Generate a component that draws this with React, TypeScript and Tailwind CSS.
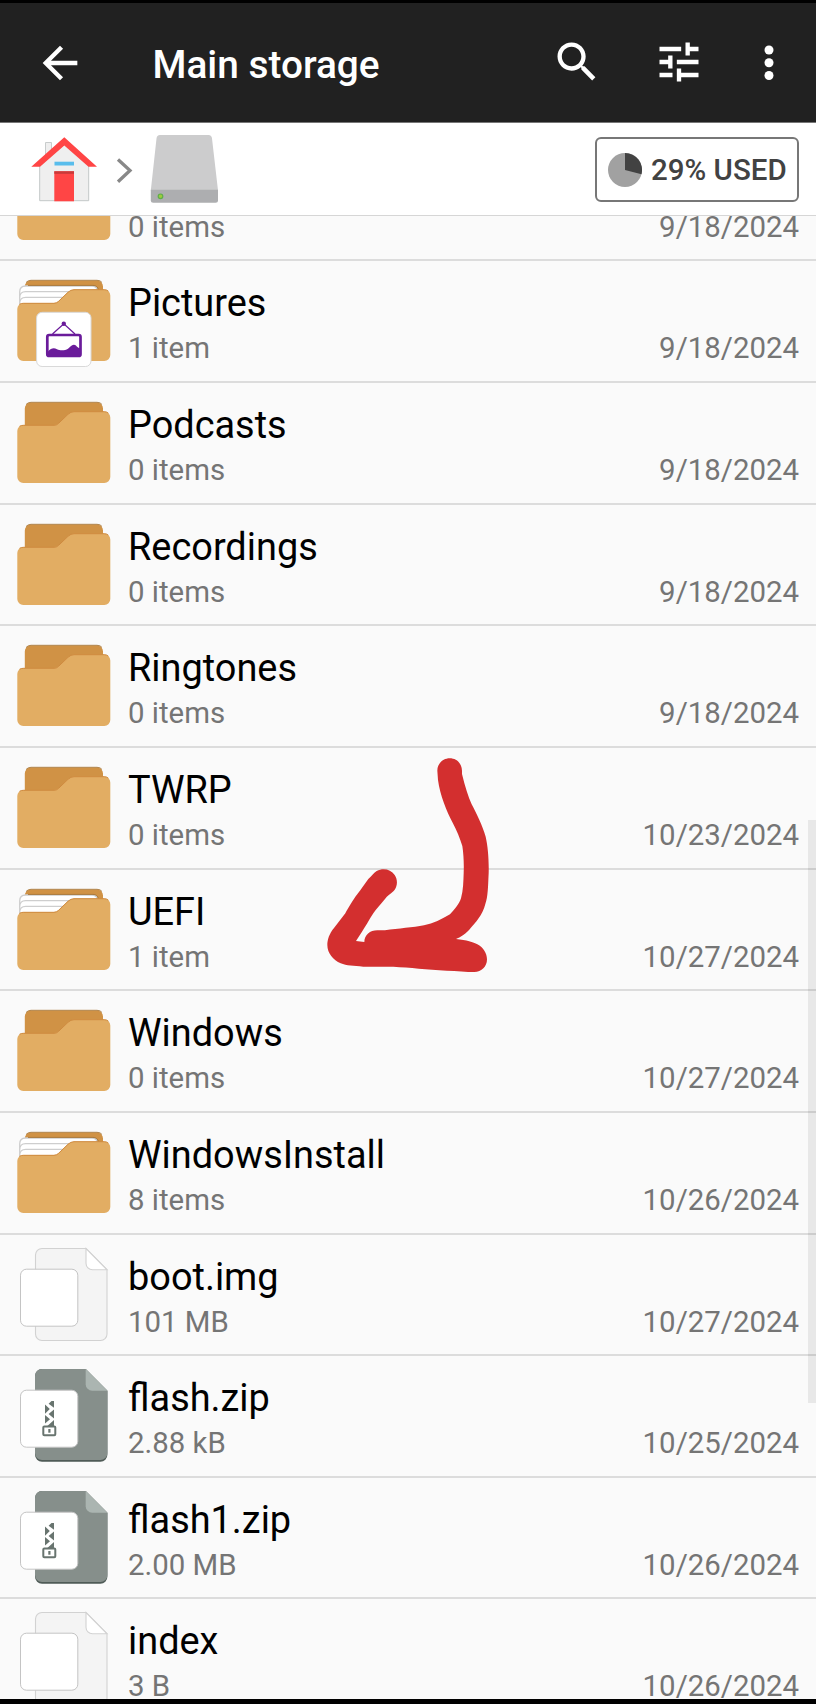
import React from "react";

type Kind = "empty" | "full" | "pictures" | "file" | "zip";

const entries: { name: string; info: string; date: string; kind: Kind }[] = [
  { name: "", info: "0 items", date: "9/18/2024", kind: "empty" },
  { name: "Pictures", info: "1 item", date: "9/18/2024", kind: "pictures" },
  { name: "Podcasts", info: "0 items", date: "9/18/2024", kind: "empty" },
  { name: "Recordings", info: "0 items", date: "9/18/2024", kind: "empty" },
  { name: "Ringtones", info: "0 items", date: "9/18/2024", kind: "empty" },
  { name: "TWRP", info: "0 items", date: "10/23/2024", kind: "empty" },
  { name: "UEFI", info: "1 item", date: "10/27/2024", kind: "full" },
  { name: "Windows", info: "0 items", date: "10/27/2024", kind: "empty" },
  { name: "WindowsInstall", info: "8 items", date: "10/26/2024", kind: "full" },
  { name: "boot.img", info: "101 MB", date: "10/27/2024", kind: "file" },
  { name: "flash.zip", info: "2.88 kB", date: "10/25/2024", kind: "zip" },
  { name: "flash1.zip", info: "2.00 MB", date: "10/26/2024", kind: "zip" },
  { name: "index", info: "3 B", date: "10/26/2024", kind: "file" },
];

function FolderIcon({ kind }: { kind: Kind }) {
  const filled = kind !== "empty";
  return (
    <svg className="h-[118px] w-[128px] shrink-0" viewBox="0 0 128 118">
      <path d="M24.8 60V25.5a6 6 0 0 1 6-6H97a6 6 0 0 1 6 6V60z" fill="#d09245" />
      <path d="M26 21.5q2-2.2 5-2.2H97q3.500 0 5 2.200" fill="none" stroke="#a9783a" strokeWidth="0.9" />
      {filled && (
        <g fill="#fff" stroke="#cecece" strokeWidth="1.300">
          <path d="M19.700 60V31q0-6 6-6H92q4.500 0 5.500 4V60z" />
          <path d="M19.700 60V36.700q0-6 6-6H92V60z" />
          <path d="M19.700 60V42.300q0-6 6-6H92V60z" />
        </g>
      )}
      {filled && <path d="M28 24.400H93q4.500 0 5.500 4.500" fill="none" stroke="#a9783a" strokeWidth="1" />}
      <path
        d="M17.300 48a6 6 0 0 1 6-6H54q2.600 0 4.400-1.800L68 31q2.800-2.600 6-2.600h30.300a6 6 0 0 1 6 6V94a6 6 0 0 1-6 6h-81a6 6 0 0 1-6-6z"
        fill="#e2ad63"
      />
      <path
        d="M19.500 43.300q1.700-1 4-1H54q2.600 0 4.400-1.800L68 31.300q2.800-2.600 6-2.600h30.300q2.500 0 4 1.400"
        fill="none"
        stroke="#cf8a3f"
        strokeWidth="1"
      />
      {kind === "pictures" && (
        <g>
          <rect x="36.600" y="51.300" width="54.400" height="54.200" rx="5.500" fill="#fff" stroke="#d9d9d9" strokeWidth="1" />
          <g fill="none" stroke="#6a1b9a">
            <path d="M52.500 73 63.800 62.800 75 73" strokeWidth="1.300" />
            <rect x="47.300" y="74" width="33.200" height="21" rx="1.800" strokeWidth="2.700" />
          </g>
          <circle cx="63.800" cy="62.700" r="2.200" fill="#6a1b9a" />
          <path
            d="M48 90.500c3-3.500 6-4 9-2.300s8 1.500 11-.5c2-1.300 3.500-4.200 6-4s3 3 6 3.500V95H48z"
            fill="#6a1b9a"
          />
        </g>
      )}
    </svg>
  );
}

function FileIcon({ zip }: { zip: boolean }) {
  return (
    <svg className="h-[118px] w-[128px] shrink-0" viewBox="0 0 128 118">
      {zip ? (
        <g>
          <path d="M35 20a7 7 0 0 1 7-7H85.700L107.400 34.700V98.700a7 7 0 0 1-7 7H42a7 7 0 0 1-7-7z" fill="#4f5b57" />
          <path d="M35 20a7 7 0 0 1 7-7H85.700L107.400 34.700V97a7 7 0 0 1-7 7H42a7 7 0 0 1-7-7z" fill="#868f8b" />
          <path d="M85.700 13 107.400 34.700H92.200a6.500 6.500 0 0 1-6.500-6.500z" fill="#abb5b1" />
        </g>
      ) : (
        <g stroke="#d2d2d2" strokeWidth="1.100">
          <path d="M35.500 20a6.500 6.500 0 0 1 6.500-6.500H86L107 34.800V99a6.500 6.500 0 0 1-6.500 6.500H42a6.500 6.500 0 0 1-6.500-6.500z" fill="#f4f4f4" />
          <path d="M86 13.500 107 34.800H92.500a6.500 6.500 0 0 1-6.500-6.500z" fill="#fff" />
        </g>
      )}
      <rect x="20.500" y="34.200" width="57.300" height="57" rx="6" fill="#fff" stroke="#c4c4c4" strokeWidth="1" />
      {zip && (
        <g>
          <path
            d="M54 45V51.800L48.600 47.700 51.500 45zM45 48.500L49.800 53 45 57.800zM54 53.400V62.600L48.600 58zM45 59L50 63.200 45 67.400zM54 64V70H47.300z"
            fill="#68746f"
          />
          <rect x="43.300" y="70.400" width="12" height="8.800" rx="1" fill="none" stroke="#68746f" strokeWidth="2" />
          <rect x="48.300" y="73" width="2.200" height="3.700" fill="#68746f" />
        </g>
      )}
    </svg>
  );
}

function Row({ name, info, date, kind }: (typeof entries)[number]) {
  return (
    <li className="flex h-[121.667px] shrink-0 border-b-2 border-[#dcdcdc]">
      {kind === "file" || kind === "zip" ? <FileIcon zip={kind === "zip"} /> : <FolderIcon kind={kind} />}
      <div className="min-w-0 flex-1 pt-[20px] pr-[17px]">
        <div className="h-[44px] text-[37.9px] leading-[44px] text-black">{name}</div>
        <div className="mt-[5px] flex justify-between text-[29.4px] leading-9 text-[#757575]">
          <span>{info}</span>
          <span>{date}</span>
        </div>
      </div>
    </li>
  );
}

function Header() {
  return (
    <header className="flex h-[120px] shrink-0 items-start border-b border-[#777] bg-[#212121] pt-[34px] text-white">
      <svg className="ml-[33.5px] h-[52px] w-[52px]" viewBox="0 0 24 24" fill="currentColor">
        <path d="M20 11H7.830l5.590-5.590L12 4l-8 8 8 8 1.410-1.410L7.830 13H20z" />
      </svg>
      <h1 className="ml-[67px] mt-[5px] flex-1 text-[38.8px] leading-[46px] font-medium whitespace-nowrap">Main storage</h1>
      <svg className="-mt-[1px] h-[52px] w-[52px]" viewBox="0 0 24 24" fill="currentColor">
        <path d="M15.500 14h-.79l-.28-.27C15.410 12.590 16 11.110 16 9.500 16 5.910 13.090 3 9.500 3S3 5.910 3 9.500 5.910 16 9.500 16c1.610 0 3.090-.59 4.230-1.570l.27.28v.79l5 4.990L20.490 19zm-6 0C7.010 14 5 11.990 5 9.500S7.010 5 9.500 5 14 7.010 14 9.500 11.990 14 9.500 14z" />
      </svg>
      <svg className="-mt-[1px] ml-[50px] h-[52px] w-[52px]" viewBox="0 0 24 24" fill="currentColor">
        <path d="M3 17v2h6v-2H3zM3 5v2h10V5H3zm10 16v-2h8v-2h-8v-2h-2v6h2zM7 9v2H3v2h4v2h2V9H7zm14 4v-2H11v2h10zm-6-4h2V7h4V5h-4V3h-2v6z" />
      </svg>
      <svg className="mr-[21px] ml-[38px] h-[52px] w-[52px]" viewBox="0 0 52 52" fill="currentColor">
        <circle cx="26" cy="13" r="4.500" />
        <circle cx="26" cy="25.700" r="4.500" />
        <circle cx="26" cy="38.500" r="4.500" />
      </svg>
    </header>
  );
}

function Breadcrumb() {
  return (
    <nav className="flex h-[93px] shrink-0 items-start border-b border-[#d6d6d6] bg-white pr-[17px]">
      <svg className="ml-[31px] h-[92px] w-[66px]" viewBox="31 123 66 92">
        <path d="M45.500 160v-17.500h6V155" fill="#efefef" stroke="#c8cccc" strokeWidth="1" />
        <path d="M39.700 165 64.300 142 88.700 165V200.700H39.700z" fill="#efefef" stroke="#c3c8c8" strokeWidth="1" />
        <path d="M31.300 166.800 64.300 137.200 97 166.800H88.500L64.300 145.500 40 166.800z" fill="#ff4545" />
        <rect x="54.500" y="161.700" width="19.500" height="3.800" fill="#59bdec" />
        <rect x="54.300" y="171.300" width="19.700" height="30" fill="#ff4545" />
        <rect x="54.300" y="171.300" width="19.700" height="2.500" fill="#c93a3a" />
      </svg>
      <svg className="ml-[18px] h-[92px] w-[20px]" viewBox="115 123 20 92">
        <path d="M118 159.500 130 170.500 118 181.800" fill="none" stroke="#888" strokeWidth="3.300" />
      </svg>
      <svg className="ml-[15px] h-[92px] w-[69px]" viewBox="150 123 69 92">
        <path d="M156.500 138.500q.3-3.500 3.500-3.500H208.500q3.200 0 3.500 3.500L218 190.500H150.800z" fill="#cccccd" />
        <path d="M150.800 189.800H218V200.200q0 2.500-2.500 2.500H153.300q-2.500 0-2.500-2.500z" fill="#adaeb0" />
        <circle cx="160.500" cy="196.300" r="2.300" fill="#9ccc3c" stroke="#5fae4a" strokeWidth="1.200" />
      </svg>
      <button className="mt-[14px] ml-auto flex h-[65px] w-[204px] items-center rounded-[6px] border-2 border-[#777] bg-white pl-[11px]">
        <svg className="h-[34px] w-[34px] shrink-0" viewBox="-17 -17 34 34">
          <circle r="17" fill="#a1a1a1" />
          <path d="M0 0V-17A17 17 0 0 1 16.500 4.200z" fill="#424242" />
        </svg>
        <span className="mt-[1px] ml-[9px] text-[29.5px] leading-9 font-medium whitespace-nowrap text-[#424242]">29% USED</span>
      </button>
    </nav>
  );
}

function Scribble() {
  return (
    <svg className="absolute top-[737px] left-[300px] h-[250px] w-[220px]" viewBox="0 0 660 750">
      <path
        fill="#d32f2f"
        d="M412 92C412 70 430 55 449 55C470 55 485 70 486 92V102C495 140 505 170 515 193C528 217 548 258 557 290C564 320 567 360 566 400C564 440 564 470 556 492C548 525 525 550 512 564C500 580 480 593 468 597C500 600 520 607 532 613C550 622 561 640 561 658C561 680 545 696 523 696C500 696 470 693 440 692C380 688 330 683 280 680L190 680C160 678 140 677 122 670C100 660 82 640 82 615C82 600 88 580 102 564L136 520C145 503 160 478 170 465C185 447 195 430 205 417C215 408 222 398 230 393C250 383 272 388 284 405C294 420 293 440 281 453C270 463 262 467 255 477C243 492 228 508 220 520C207 540 195 562 185 577L168 603L193 606C193 585 210 571 232 571L255 571C295 565 340 563 372 556C400 550 425 538 450 523C465 508 478 490 483 475C490 450 490 425 491 400C492 370 491 345 487 318C480 295 470 270 458 248C440 215 420 165 414 120Z"
      />
    </svg>
  );
}

export default function App() {
  return (
    <div className="relative flex h-[1704px] w-[816px] flex-col overflow-hidden border-t-[3px] border-b-[5px] border-black bg-[#fafafa] font-['Roboto',sans-serif]">
      <Header />
      <Breadcrumb />
      <main className="min-h-0 flex-1 overflow-hidden">
        <ul className="-mt-[76.4px]">
          {entries.map((e, i) => (
            <Row key={i} {...e} />
          ))}
        </ul>
      </main>
      <div className="absolute top-[817px] right-0 h-[583px] w-2 bg-black/7" />
      <Scribble />
    </div>
  );
}
